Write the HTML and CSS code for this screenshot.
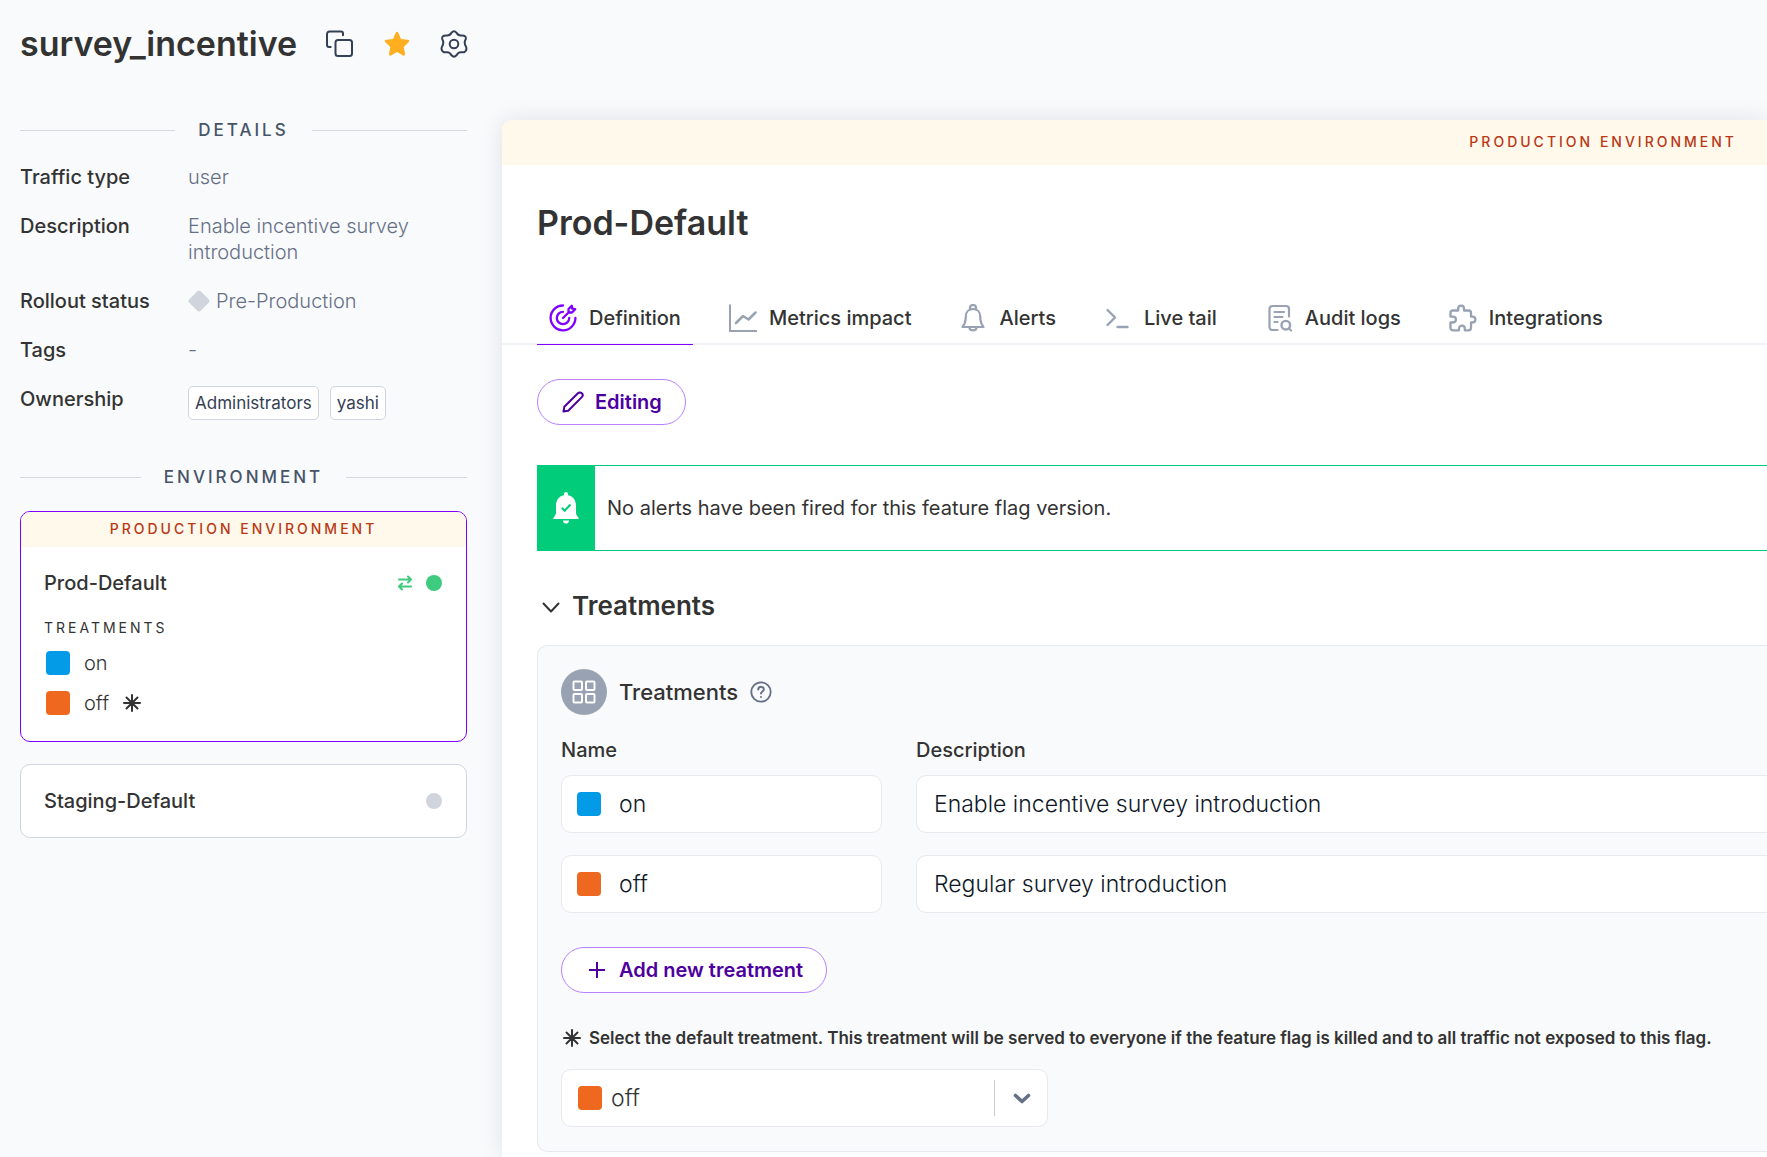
FILE: index.html
```html
<!DOCTYPE html>
<html lang="en">
<head>
<meta charset="utf-8">
<meta name="viewport" content="width=device-width, initial-scale=1">
<title>survey_incentive</title>
<link rel="stylesheet" href="styles.css">
</head>
<body>
<header class="page-header">
  <h1 class="flag-name">survey_incentive</h1>
  <button class="icon-button" type="button" aria-label="Copy name">
    <svg viewBox="0 0 28 28" width="28" height="28" fill="none" stroke="#344054" stroke-width="2" stroke-linecap="round" stroke-linejoin="round"><rect x="9.500" y="10" width="16.500" height="16" rx="2.500"/><path d="M4.700 17H3A2 2 0 0 1 1 15V4A2.500 2.500 0 0 1 3.500 1.500H15A2 2 0 0 1 17 3.500V5.200"/></svg>
  </button>
  <button class="icon-button" type="button" aria-label="Favorite">
    <svg viewBox="0 0 28 28" width="28" height="28" fill="#ffae1f"><path d="M12.700 2.800Q14 .8 15.300 2.800L18 9L24.800 9.700Q27.300 10.200 25.600 12.200L20.700 16.900L22 23.800Q22.200 26.400 20 25.500L14 22L8 25.500Q5.800 26.400 6 23.800L7.300 16.900L2.400 12.200Q.7 10.200 3.200 9.700L10 9Z"/></svg>
  </button>
  <button class="icon-button" type="button" aria-label="Settings">
    <svg viewBox="0 0 28 28" width="28" height="28" fill="none" stroke="#344054" stroke-width="2" stroke-linejoin="round"><circle cx="14" cy="14" r="4.300"/><path d="M11.400 2.800Q14 -.2 16.600 2.800C17.800 5.200 19 5.800 21.600 5.400Q26.400 5.200 25.800 9C24.200 11.800 24.200 13.600 25.800 16.200Q27.600 20.200 24.600 22Q23.400 22.600 21 22.200C19 22 17.800 22.800 16.600 25.200Q14 28.200 11.400 25.200C10.200 22.800 9 22 7 22.200Q4.600 22.600 3.400 22Q.4 20.200 2.200 16.200C3.800 13.600 3.800 11.800 2.200 9Q1.600 5.200 6.400 5.400C9 5.800 10.200 5.200 11.400 2.800Z"/></svg>
  </button>
</header>

<div class="layout">
  <aside class="sidebar">
    <h2 class="divider-title">Details</h2>
    <dl class="details">
      <dt>Traffic type</dt><dd>user</dd>
      <dt>Description</dt><dd>Enable incentive survey introduction</dd>
      <dt>Rollout status</dt>
      <dd class="status"><svg viewBox="0 0 22 22" width="22" height="22" fill="#d0d5dd"><rect x="3" y="3" width="16" height="16" rx="2" transform="rotate(45 11 11)"/></svg>Pre-Production</dd>
      <dt>Tags</dt><dd>-</dd>
      <dt>Ownership</dt><dd class="chips"><span class="chip">Administrators</span><span class="chip">yashi</span></dd>
    </dl>

    <h2 class="divider-title environment-title">Environment</h2>
    <section class="env-card env-card-active">
      <div class="env-band">Production environment</div>
      <div class="env-body">
        <div class="env-head">
          <h3 class="env-name">Prod-Default</h3>
          <svg viewBox="0 0 14 16" width="14" height="16" fill="none" stroke="#3ecb7f" stroke-width="2" stroke-linecap="round" stroke-linejoin="round"><path d="M1 4.500H13M10 1.500L13 4.500L10 7.500M13 11.500H1M4 8.500L1 11.500L4 14.500"/></svg>
          <span class="dot dot-on"></span>
        </div>
        <h4 class="env-subtitle">Treatments</h4>
        <ul class="env-treatments">
          <li><span class="swatch swatch-blue"></span>on</li>
          <li><span class="swatch swatch-orange"></span>off
            <svg viewBox="0 0 18 18" width="18" height="18" stroke="#333" stroke-width="2" stroke-linecap="round"><path d="M9 1V17M1 9H17M3.500 3.500L14.500 14.500M14.500 3.500L3.500 14.500"/></svg></li>
        </ul>
      </div>
    </section>
    <section class="env-card">
      <div class="env-body">
        <div class="env-head">
          <h3 class="env-name">Staging-Default</h3>
          <span class="dot"></span>
        </div>
      </div>
    </section>
  </aside>

  <main class="main">
    <div class="main-band">Production environment</div>
    <h2 class="main-title">Prod-Default</h2>
    <nav class="tabs">
      <a class="tab tab-active" href="#definition">
        <svg viewBox="0 0 28 28" width="28" height="28" fill="none" stroke="currentColor" stroke-width="2.300" stroke-linecap="round" stroke-linejoin="round"><path d="M14 1.500A12.400 12.400 0 1 0 26.400 14M14 7.800A6.200 6.200 0 1 0 20.200 14M14 14L19.500 8.500M19.500 8.500V5L22.800 1.800L23.300 4.700L26.200 5.200L23 8.500Z"/></svg>Definition</a>
      <a class="tab" href="#metrics">
        <svg viewBox="0 0 28 28" width="28" height="28" fill="none" stroke="currentColor" stroke-width="2"><path d="M1 .5V27H28"/><path d="M7 19L14 12L19.500 15.500L26.500 8.500" stroke-width="2.500" stroke-linecap="round" stroke-linejoin="round"/></svg>Metrics impact</a>
      <a class="tab" href="#alerts">
        <svg viewBox="0 0 28 28" width="28" height="28" fill="none" stroke="currentColor" stroke-width="2.200" stroke-linecap="round" stroke-linejoin="round"><path d="M11 5.800V4A3 3 0 0 1 17 4V5.800M14 5C9.500 5 6.800 8.200 6.800 12.500C6.800 17.500 5.500 20.500 3.500 23H24.500C22.500 20.500 21.200 17.500 21.200 12.500C21.200 8.200 18.500 5 14 5ZM10.500 24C11.200 27.200 16.800 27.200 17.500 24"/></svg>Alerts</a>
      <a class="tab" href="#live-tail">
        <svg viewBox="0 0 28 28" width="28" height="28" fill="none" stroke="currentColor" stroke-width="2.400" stroke-linecap="round" stroke-linejoin="round"><path d="M3.500 6L11 13.500L3.500 21M13.500 23H23.500"/></svg>Live tail</a>
      <a class="tab" href="#audit-logs">
        <svg viewBox="0 0 28 28" width="28" height="28" fill="none" stroke="currentColor" stroke-width="2.200" stroke-linecap="round" stroke-linejoin="round"><path d="M12.500 26H7.500A3 3 0 0 1 4.500 23V5A3 3 0 0 1 7.500 2H21A3 3 0 0 1 24 5V12.500M9.500 8H19M9.500 13H17.500M9.500 18H12.500M24 24.500L26 26.500"/><circle cx="20.800" cy="21.200" r="4.300" stroke-width="2.400"/></svg>Audit logs</a>
      <a class="tab" href="#integrations">
        <svg viewBox="0 0 28 28" width="28" height="28" fill="none" stroke="currentColor" stroke-width="2.300" stroke-linejoin="round"><path d="M9.200 6.500V4.500A2.900 2.900 0 0 1 15 4.500V6.500H19.500A2.500 2.500 0 0 1 22 9V12.700H23.500A2.900 2.900 0 0 1 23.500 18.500H22V23.800A2.500 2.500 0 0 1 19.500 26.300H15.800V24.500A2.900 2.900 0 0 0 10 24.500V26.300H4A2.500 2.500 0 0 1 1.500 23.800V18.500H4A2.900 2.900 0 0 0 4 12.700H1.500V9A2.500 2.500 0 0 1 4 6.500Z"/></svg>Integrations</a>
    </nav>

    <div class="content">
      <button class="pill" type="button">
        <svg viewBox="0 0 24 24" width="24" height="24" fill="none" stroke="currentColor" stroke-width="2" stroke-linejoin="round"><path d="M2.500 21.500L3.300 16.800L16.900 3.200A2.700 2.700 0 0 1 20.800 7.100L7.200 20.700Z"/></svg>Editing</button>

      <div class="alert" role="status">
        <div class="alert-icon">
          <svg viewBox="0 0 28 32" width="28" height="32" fill="#fff"><path d="M12 2A2 2 0 0 1 16 2V3.200C21.500 4.200 24 8.500 24 14V21C24 23.500 26.800 25 26.800 27H1.200C1.200 25 4 23.500 4 21V14C4 8.500 6.500 4.200 12 3.200ZM11 28.500H17A3 3 0 0 1 11 28.500Z"/><path d="M9.800 15.800L12.700 18.700L18.500 12.500" fill="none" stroke="#00cc79" stroke-width="2"/></svg>
        </div>
        <p class="alert-text">No alerts have been fired for this feature flag version.</p>
      </div>

      <h3 class="section-title">
        <svg viewBox="0 0 28 28" width="28" height="28" fill="none" stroke="#333" stroke-width="2" stroke-linecap="round" stroke-linejoin="round"><path d="M6.500 11.500L14 19.500L21.500 11.500"/></svg>Treatments</h3>

      <section class="panel">
        <div class="panel-head">
          <span class="panel-badge">
            <svg viewBox="0 0 24 24" width="24" height="24" fill="none" stroke="#fff" stroke-width="2"><rect x="1.500" y="1.500" width="8.500" height="8.500" rx="1"/><rect x="14" y="1.500" width="8.500" height="8.500" rx="1"/><rect x="1.500" y="14" width="8.500" height="8.500" rx="1"/><rect x="14" y="14" width="8.500" height="8.500" rx="1"/></svg>
          </span>
          <h4 class="panel-title">Treatments</h4>
          <button class="icon-button" type="button" aria-label="Help">
            <svg viewBox="0 0 22 22" width="22" height="22" fill="none" stroke="#667085" stroke-width="2" stroke-linecap="round"><circle cx="11" cy="11" r="9.700" stroke-width="1.800"/><path d="M8.200 8.500C8.500 4.800 14 5.200 13.800 8.500C13.700 10.400 11 10.500 11 12.500"/><path d="M11 16V16.100"/></svg>
          </button>
        </div>

        <div class="fields">
          <label class="field-label" for="name-1">Name</label>
          <label class="field-label" for="description-1">Description</label>
          <div class="field"><span class="swatch swatch-blue"></span><input id="name-1" class="field-input" type="text" value="on"></div>
          <div class="field field-open"><input id="description-1" class="field-input" type="text" value="Enable incentive survey introduction"></div>
          <div class="field"><span class="swatch swatch-orange"></span><input class="field-input" type="text" value="off" aria-label="Name"></div>
          <div class="field field-open"><input class="field-input" type="text" value="Regular survey introduction" aria-label="Description"></div>
        </div>

        <button class="pill pill-add" type="button">
          <svg viewBox="0 0 24 24" width="24" height="24" fill="none" stroke="currentColor" stroke-width="2"><path d="M12 4V20M4 12H20"/></svg>Add new treatment</button>

        <label class="default-label" for="default-treatment">
          <svg viewBox="0 0 18 18" width="18" height="18" stroke="#333" stroke-width="2" stroke-linecap="round"><path d="M9 1V17M1 9H17M3.500 3.500L14.500 14.500M14.500 3.500L3.500 14.500"/></svg>Select the default treatment. This treatment will be served to everyone if the feature flag is killed and to all traffic not exposed to this flag.</label>
        <div class="select">
          <select id="default-treatment" class="select-input"><option>on</option><option selected>off</option></select>
          <span class="swatch swatch-orange select-swatch"></span>
          <span class="select-arrow"><svg viewBox="0 0 20 20" width="20" height="20" fill="none" stroke="#667085" stroke-width="3.600" stroke-linecap="round" stroke-linejoin="round"><path d="M3.500 7.500L10 13.500L16.500 7.500"/></svg></span>
        </div>
      </section>
    </div>
  </main>
</div>
</body>
</html>
```
FILE: styles.css
```css
* { box-sizing: border-box; }

body {
  margin: 0;
  background: #f9fafc;
  color: #333;
  font-family: Inter, "Liberation Sans", sans-serif;
  font-size: 20px;
  font-weight: 300;
  line-height: 26px;
  overflow-x: hidden;
}

h1, h2, h3, h4, p, ul, dl, dd { margin: 0; padding: 0; }
svg { display: block; flex: none; }
button, input, select { font: inherit; color: inherit; }

.icon-button { padding: 0; border: 0; background: none; cursor: pointer; }

.page-header {
  display: flex;
  align-items: center;
  gap: 29px;
  height: 88px;
  padding: 0 20px;
}
.flag-name { font-size: 34px; line-height: 44px; font-weight: 600; }

.layout {
  display: grid;
  grid-template-columns: 447px minmax(0, 1fr);
  gap: 35px;
  padding: 32px 0 0 20px;
}

/* Sidebar */
.divider-title {
  display: flex;
  align-items: center;
  gap: 23px;
  color: #475467;
  font-size: 17px;
  line-height: 20px;
  font-weight: 500;
  letter-spacing: 3px;
  text-transform: uppercase;
}
.divider-title::before, .divider-title::after {
  content: "";
  flex: 1;
  height: 1px;
  background: #d5d8de;
}
.environment-title { margin-top: 47px; }

.details {
  display: grid;
  grid-template-columns: 168px 1fr;
  row-gap: 23px;
  margin-top: 24px;
}
.details dt { font-weight: 500; }
.details dd { color: #667085; }
.status { display: flex; align-items: center; gap: 6px; }
.chips { display: flex; gap: 11px; }
.details .chip {
  padding: 4px 6px;
  border: 1px solid #d0d5dd;
  border-radius: 5px;
  background: #fff;
  color: #344054;
  font-size: 17px;
  line-height: 24px;
  font-weight: 400;
}

.env-card {
  margin-top: 22px;
  border: 1px solid #d0d5dd;
  border-radius: 10px;
  background: #fff;
  overflow: hidden;
}
.env-card-active { margin-top: 24px; border-color: #8000ff; }
.env-band {
  padding-bottom: 2px;
  background: #fff9ec;
  color: #b93815;
  font-size: 14px;
  line-height: 33px;
  font-weight: 500;
  letter-spacing: 3px;
  text-align: center;
  text-transform: uppercase;
}
.env-body { padding: 23px; }
.env-head { display: flex; align-items: center; gap: 14px; padding-right: 1px; }
.env-name { flex: 1; font-size: 20px; font-weight: 500; }
.dot { width: 16px; height: 16px; border-radius: 50%; background: #d0d5dd; }
.dot-on { background: #3ecb7f; }
.env-subtitle {
  margin: 22px 0 12px;
  font-size: 14px;
  line-height: 20px;
  font-weight: 400;
  letter-spacing: 3px;
  text-transform: uppercase;
}
.env-treatments { display: grid; gap: 14px; list-style: none; padding: 0 2px 2px; }
.env-treatments li { display: flex; align-items: center; gap: 14px; }

.swatch { flex: none; width: 24px; height: 24px; border-radius: 4px; }
.swatch-blue { background: #039be8; }
.swatch-orange { background: #ee6820; }

/* Main area */
.main {
  border-radius: 10px 0 0 0;
  background: #fff;
  box-shadow: 0 0 24px rgba(16, 24, 40, 0.1);
}
.main-band {
  padding: 0 30px 2px 0;
  border-radius: 10px 0 0 0;
  background: #fff9ec;
  color: #b93815;
  font-size: 14px;
  line-height: 43px;
  font-weight: 500;
  letter-spacing: 3px;
  text-align: right;
  text-transform: uppercase;
}
.main-title {
  margin: 36px 35px 47px;
  font-size: 34px;
  line-height: 44px;
  font-weight: 600;
}

.tabs {
  display: flex;
  gap: 24px;
  padding-left: 35px;
  border-bottom: 2px solid #f2f3f8;
}
.tab {
  display: flex;
  align-items: center;
  gap: 12px;
  margin-bottom: -2px;
  padding: 12px;
  border-bottom: 1px solid transparent;
  color: #333;
  font-weight: 500;
  text-decoration: none;
}
.tab svg { color: #98a2b3; }
.tab-active { border-color: #8000ff; }
.tab-active svg { color: #8000ff; }

.content { padding: 34px 0 5px 35px; }

.pill {
  display: flex;
  align-items: center;
  gap: 10px;
  height: 46px;
  padding: 0 23px;
  border: 1px solid #b980ff;
  border-radius: 23px;
  background: #fff;
  color: #4d00a0;
  font-weight: 600;
  cursor: pointer;
}

.alert {
  display: flex;
  height: 86px;
  margin-top: 40px;
  border: 1px solid #00cc79;
  border-right: 0;
}
.alert-icon {
  display: grid;
  place-items: center;
  width: 57px;
  padding-right: 1px;
  background: #00cc79;
}
.alert-text { align-self: center; padding-left: 12px; font-weight: 400; }

.section-title {
  display: flex;
  align-items: center;
  gap: 7px;
  margin: 39px 0 23px;
  font-size: 26px;
  line-height: 32px;
  font-weight: 600;
}

.panel {
  padding: 23px 0 24px 23px;
  border: 1px solid #e7e9ee;
  border-right: 0;
  border-radius: 10px 0 0 10px;
  background: #f9fafc;
}
.panel-head { display: flex; align-items: center; gap: 12px; }
.panel-badge {
  display: grid;
  place-items: center;
  width: 46px;
  height: 46px;
  border-radius: 50%;
  background: #98a2b3;
}
.panel-title { font-size: 22px; font-weight: 500; }

.fields {
  display: grid;
  grid-template-columns: 321px minmax(0, 1fr);
  gap: 22px 34px;
  margin-top: 22px;
}
.field-label { margin-bottom: -10px; font-weight: 500; }
.field {
  display: flex;
  align-items: center;
  gap: 18px;
  height: 58px;
  padding: 0 15px;
  border: 1px solid #e7e9ee;
  border-radius: 10px;
  background: #fff;
}
.field-open {
  padding: 0 17px;
  border-right: 0;
  border-radius: 10px 0 0 10px;
}
.field-input {
  flex: 1;
  min-width: 0;
  height: 30px;
  padding: 0;
  border: 0;
  background: none;
  color: #101828;
  font-size: 23px;
}

.pill-add { margin-top: 34px; }

.default-label {
  display: flex;
  align-items: center;
  gap: 8px;
  margin-top: 33px;
  padding-left: 2px;
  font-size: 17px;
  line-height: 24px;
  font-weight: 600;
}
.select {
  display: grid;
  grid-template-columns: 56px 1fr 54px;
  align-items: center;
  width: 487px;
  margin-top: 19px;
}
.select > * { grid-row: 1; }
.select-input {
  grid-column: 1 / -1;
  height: 58px;
  padding: 0 60px 0 49px;
  border: 1px solid #e7e9ee;
  border-radius: 10px;
  background: #fff;
  font-size: 23px;
  appearance: none;
}
.select-swatch { grid-column: 1; margin-left: 17px; pointer-events: none; }
.select-arrow {
  grid-column: 3;
  display: grid;
  place-items: center;
  height: 36px;
  border-left: 1px solid #ccc;
  pointer-events: none;
}
```
